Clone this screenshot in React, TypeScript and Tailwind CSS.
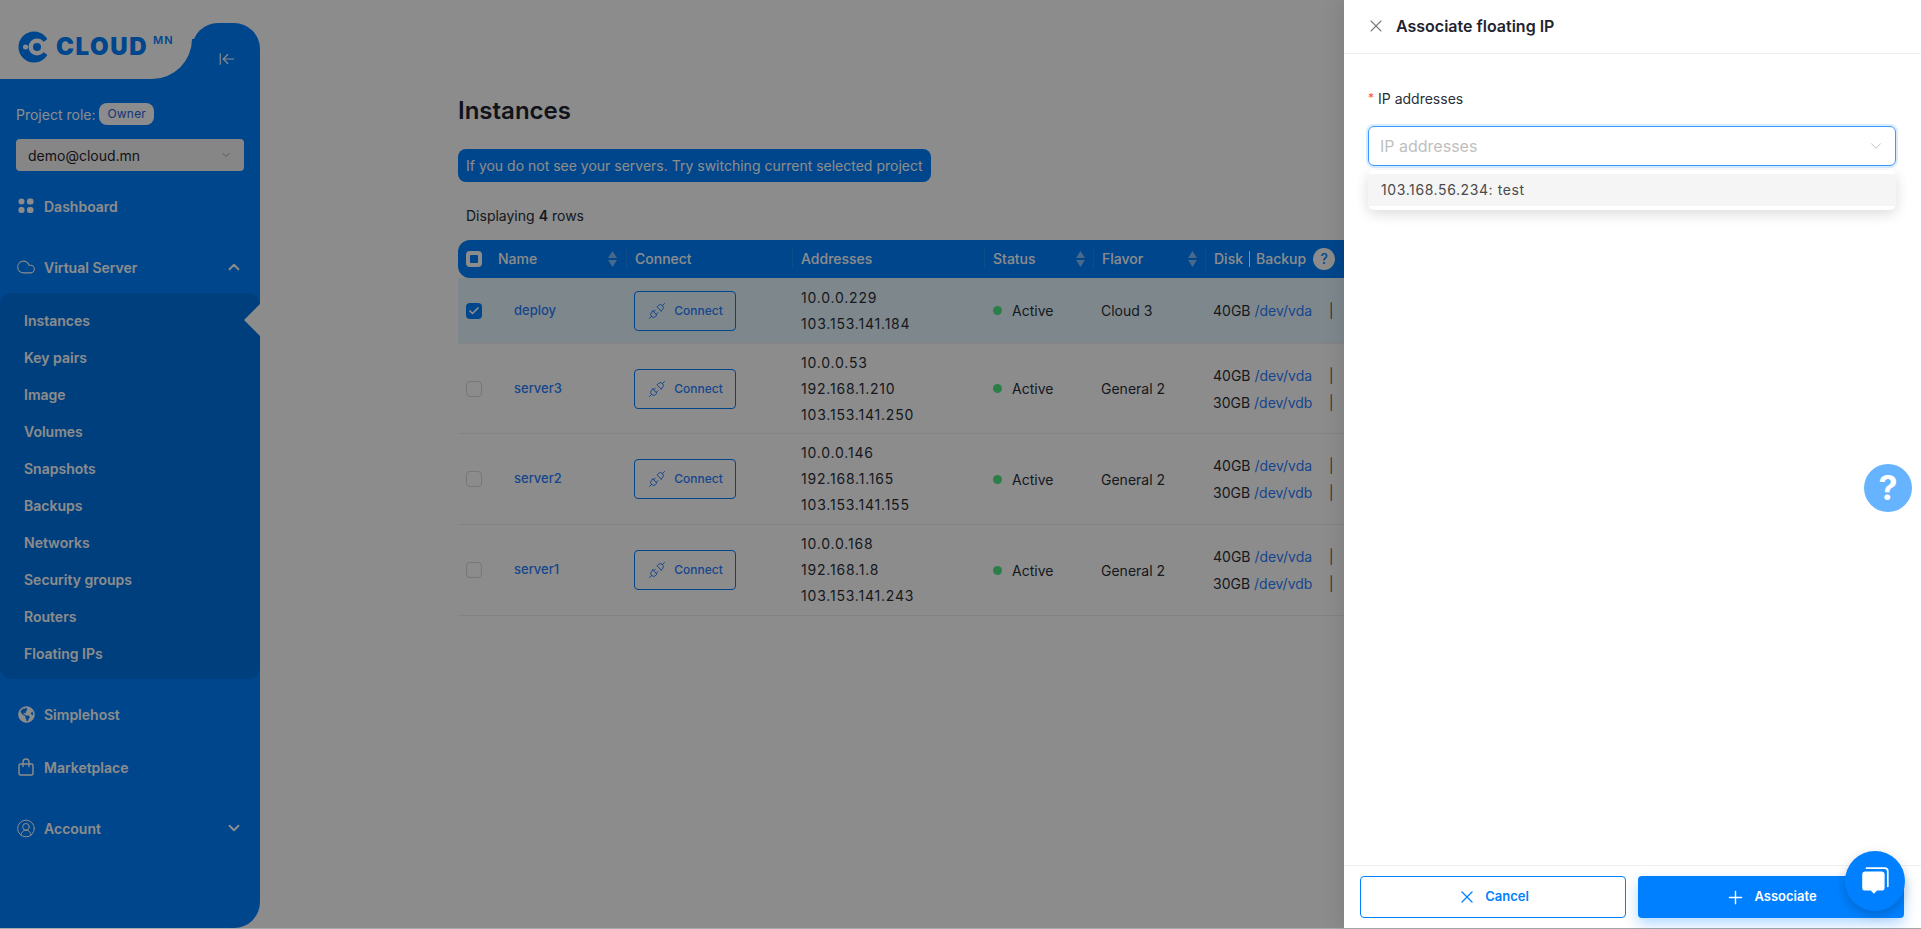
import { ArrowLeftToLine, Check, ChevronDown, ChevronUp, CircleUserRound, Cloud, Plus, X } from "lucide-react";
import { FaGlobeAmericas } from "react-icons/fa";
import { TbPlugConnected } from "react-icons/tb";

const subMenu = ["Instances", "Key pairs", "Image", "Volumes", "Snapshots", "Backups", "Networks", "Security groups", "Routers", "Floating IPs"];

const rows = [
  { name: "deploy", ips: ["10.0.0.229", "103.153.141.184"], flavor: "Cloud 3", disks: ["40GB"], selected: true, height: "h-[66px]" },
  { name: "server3", ips: ["10.0.0.53", "192.168.1.210", "103.153.141.250"], flavor: "General 2", disks: ["40GB", "30GB"], selected: false, height: "h-[90px]" },
  { name: "server2", ips: ["10.0.0.146", "192.168.1.165", "103.153.141.155"], flavor: "General 2", disks: ["40GB", "30GB"], selected: false, height: "h-[91px]" },
  { name: "server1", ips: ["10.0.0.168", "192.168.1.8", "103.153.141.243"], flavor: "General 2", disks: ["40GB", "30GB"], selected: false, height: "h-[91px]" },
];

function Logo() {
  return (
    <div className="flex items-start pl-[18px] pt-[31px]">
      <svg width="32" height="32" viewBox="0 0 32 32" className="shrink-0">
        <circle cx="16" cy="16" r="15.5" fill="#0080ff" />
        <path d="M19 16 L32 6 L32 26 Z" fill="#ffffff" />
        <circle cx="19" cy="16" r="8.5" fill="#ffffff" />
        <circle cx="19" cy="16" r="4" fill="#0080ff" />
        <circle cx="7.5" cy="16" r="2.5" fill="#ffffff" />
      </svg>
      <span className="ml-[6px] mt-[1px] text-[24px] leading-[30px] font-black tracking-[1.6px] text-[#0080ff]">CLOUD</span>
      <span className="ml-[5px] mt-[2px] text-[11px] leading-[14px] font-semibold tracking-[1px] text-[#0080ff]">MN</span>
    </div>
  );
}

function DashIcon() {
  return (
    <svg width="20" height="20" viewBox="0 0 20 20" fill="currentColor">
      <circle cx="5.5" cy="5.5" r="3" />
      <rect x="11" y="2.5" width="6.5" height="6" rx="2.5" />
      <rect x="2.5" y="11" width="6" height="6" rx="2.5" />
      <rect x="11" y="11" width="6.5" height="6" rx="2.5" />
    </svg>
  );
}

function BagIcon() {
  return (
    <svg width="20" height="20" viewBox="0 0 20 20" fill="none" stroke="currentColor" strokeWidth="1.4" strokeLinejoin="round">
      <rect x="3" y="7" width="14" height="11" rx="1.5" />
      <path d="M7 9.5 V5 Q7 2 10 2 Q13 2 13 5 V9.5" strokeLinecap="round" />
    </svg>
  );
}

function NavItem({ icon, label, chevron, className }: { icon: React.ReactNode; label: string; chevron?: "up" | "down"; className: string }) {
  return (
    <div className={`flex items-center pl-[16px] pr-[17px] text-white ${className}`}>
      <span className="flex w-[20px] justify-center">{icon}</span>
      <span className="ml-[8px] flex-1 text-[14px] font-semibold">{label}</span>
      {chevron === "up" && <ChevronUp size={18} strokeWidth={2.5} />}
      {chevron === "down" && <ChevronDown size={18} strokeWidth={2.5} />}
    </div>
  );
}

function Sidebar() {
  return (
    <aside className="flex h-full w-[260px] shrink-0 flex-col">
      <div className="relative flex h-[79px]">
        <div className="absolute bottom-0 left-[140px] h-[40px] w-[60px] bg-[#0080ff]" />
        <div className="relative w-[192px] rounded-br-[40px] bg-white">
          <Logo />
        </div>
        <div className="mt-[23px] flex flex-1 justify-center rounded-t-[26px] bg-[#0080ff] pl-[2px] pt-[27px] text-white">
          <ArrowLeftToLine size={18} strokeWidth={1.5} />
        </div>
      </div>
      <div className="flex flex-1 flex-col rounded-br-[26px] bg-[#0080ff]">
        <div className="mt-[24px] flex items-center pl-[16px]">
          <span className="text-[14px] text-white">Project role:</span>
          <span className="ml-[4px] rounded-[8px] bg-white px-[8px] py-[2px] text-[12px] tracking-[0.2px] text-[#2563d8]">Owner</span>
        </div>
        <div className="mx-[16px] mt-[14px] flex h-[32px] items-center justify-between rounded-[4px] bg-[#f5f5f5] px-[12px] text-[14px] text-[#1f2430]">
          demo@cloud.mn
          <ChevronDown size={12} className="text-[#a0a0a0]" />
        </div>
        <NavItem icon={<DashIcon />} label="Dashboard" className="mt-[20px] h-[30px]" />
        <NavItem icon={<Cloud size={22} strokeWidth={1.3} />} label="Virtual Server" chevron="up" className="mt-[31px] h-[30px]" />
        <div className="relative mt-[11px] flex h-[386px] flex-col rounded-[12px] bg-[#0073e6] pl-[24px] pt-[9px]">
          {subMenu.map((item) => (
            <div key={item} className="flex h-[37px] shrink-0 items-center text-[14px] font-semibold text-white">
              {item}
            </div>
          ))}
          <div className="absolute right-0 top-[11px] h-[32px] w-[16px] bg-white [clip-path:polygon(100%_0,0_50%,100%_100%)]" />
        </div>
        <NavItem icon={<FaGlobeAmericas size={17} />} label="Simplehost" className="mt-[20px] h-[30px]" />
        <NavItem icon={<BagIcon />} label="Marketplace" className="mt-[23px] h-[30px]" />
        <NavItem icon={<CircleUserRound size={23} strokeWidth={1.2} />} label="Account" chevron="down" className="mt-[31px] h-[30px]" />
      </div>
    </aside>
  );
}

function SortCarets() {
  return (
    <span className="flex flex-col gap-[2px] text-white/50">
      <svg width="9" height="7" viewBox="0 0 9 7" fill="currentColor"><path d="M4.5 0 L9 7 L0 7 Z" /></svg>
      <svg width="9" height="7" viewBox="0 0 9 7" fill="currentColor"><path d="M0 0 L9 0 L4.5 7 Z" /></svg>
    </span>
  );
}

function HeaderCell({ label, sort }: { label: string; sort?: boolean }) {
  return (
    <div className="flex items-center justify-between border-l border-white/10 pl-[8px] pr-[8px]">
      <span>{label}</span>
      {sort && <SortCarets />}
    </div>
  );
}

function Table() {
  return (
    <div className="w-[1300px] text-[14px] text-[#2a2f3a]">
      <div className="flex h-[48px] items-center pb-[1px] pl-[8px]">
        Displaying <b className="mx-[4px] font-semibold">4</b> rows
      </div>
      <div className="grid h-[38px] grid-cols-[32px_136px_166px_192px_109px_112px_1fr] items-center rounded-l-[12px] bg-[#0080ff] pb-[1px] text-[14px] font-medium text-white">
        <div className="flex justify-center">
          <span className="ml-[-1px] flex h-[16px] w-[16px] items-center justify-center rounded-[4px] bg-white">
            <span className="h-[8px] w-[8px] rounded-[1px] bg-[#0080ff]" />
          </span>
        </div>
        <div className="flex items-center justify-between pl-[8px] pr-[9px]">
          <span>Name</span>
          <SortCarets />
        </div>
        <HeaderCell label="Connect" />
        <HeaderCell label="Addresses" />
        <HeaderCell label="Status" sort />
        <HeaderCell label="Flavor" sort />
        <div className="flex items-center border-l border-white/10 pl-[8px]">
          <span>Disk</span>
          <span className="mx-[6px] h-[16px] w-[1px] bg-white" />
          <span>Backup</span>
          <span className="ml-[7px] flex h-[22px] w-[22px] items-center justify-center rounded-full bg-white text-[14px] text-[#0080ff]">?</span>
        </div>
      </div>
      {rows.map((row) => (
        <div
          key={row.name}
          className={`grid grid-cols-[32px_136px_166px_192px_109px_112px_1fr] items-center border-b border-[#eeeeee] ${row.height} ${row.selected ? "bg-[#e6f7ff]" : "bg-white"}`}
        >
          <div className="flex justify-center">
            {row.selected ? (
              <span className="ml-[-1px] flex h-[16px] w-[16px] items-center justify-center rounded-[4px] bg-[#0080ff]">
                <Check size={12} strokeWidth={3.5} className="text-white" />
              </span>
            ) : (
              <span className="ml-[-1px] h-[16px] w-[16px] rounded-[4px] border border-[#d9d9d9] bg-white" />
            )}
          </div>
          <div className="pl-[24px] text-[13px] font-medium text-[#2b7fff]">{row.name}</div>
          <div className="pl-[8px]">
            <div className="flex h-[40px] w-[102px] items-center justify-center gap-[7px] rounded-[4px] border border-[#0080ff] text-[12px] font-medium text-[#2b7fff]">
              <TbPlugConnected size={20} strokeWidth={1.2} />
              Connect
            </div>
          </div>
          <div className="pl-[9px] leading-[26px] tracking-[0.8px]">
            {row.ips.map((ip) => (
              <div key={ip}>{ip}</div>
            ))}
          </div>
          <div className="flex items-center pl-[9px]">
            <span className="h-[9px] w-[9px] rounded-full bg-[#4fe684]" />
            <span className="ml-[10px]">Active</span>
          </div>
          <div className="pl-[8px]">{row.flavor}</div>
          <div className="pl-[8px] leading-[27px]">
            {row.disks.map((disk, i) => (
              <div key={disk} className="flex">
                <span className="w-[116px]">
                  {disk} <span className="text-[#2b7fff]">{i === 0 ? "/dev/vda" : "/dev/vdb"}</span>
                </span>
                <span className="font-light">|</span>
              </div>
            ))}
          </div>
        </div>
      ))}
    </div>
  );
}

function Drawer() {
  return (
    <div className="absolute bottom-[1px] right-0 top-0 z-20 flex w-[577px] flex-col bg-white shadow-[-6px_0_16px_rgba(0,0,0,0.08)]">
      <div className="flex h-[54px] shrink-0 items-center border-b border-[#f0f0f0] pb-[1px] pl-[22px]">
        <X size={20} strokeWidth={1.3} className="text-[#7a7a7a]" />
        <span className="ml-[10px] text-[16px] font-semibold text-[#1f2430]">Associate floating IP</span>
      </div>
      <div className="flex-1 pl-[24px] pr-[25px] pt-[33px]">
        <div className="flex h-[22px] items-center text-[14px] text-[#2a2f3a]">
          <span className="mr-[4px] text-[12px] text-[#ff4d4f]">*</span>IP addresses
        </div>
        <div className="mt-[17px] flex h-[40px] items-center justify-between rounded-[6px] border-[1.5px] border-[#3a9bff] pl-[11px] pr-[10px] text-[16px] text-[#bfbfbf] shadow-[0_0_0_2px_rgba(0,128,255,0.15)]">
          IP addresses
          <ChevronDown size={18} strokeWidth={1.1} className="text-[#a9b4c0]" />
        </div>
        <div className="mt-[4px] rounded-[6px] bg-white py-[4px] shadow-[0_4px_14px_rgba(0,0,0,0.14)]">
          <div className="flex h-[32px] items-center bg-[#f5f5f5] pb-[1px] pl-[13px] text-[14px] tracking-[0.6px] text-[#4a4a4a]">103.168.56.234: test</div>
        </div>
      </div>
      <div className="flex h-[63px] shrink-0 gap-[12px] border-t border-[#f0f0f0] pl-[16px] pt-[10px]">
        <div className="flex h-[42px] w-[266px] items-center justify-center gap-[8px] rounded-[4px] border border-[#0080ff] text-[13px] font-semibold text-[#0080ff]">
          <X size={20} strokeWidth={1.5} />
          Cancel
        </div>
        <div className="flex h-[42px] w-[266px] items-center justify-center gap-[8px] rounded-[4px] bg-[#0080ff] text-[13px] font-semibold text-white shadow-[0_6px_14px_rgba(0,128,255,0.3)]">
          <Plus size={21} strokeWidth={1.6} />
          Associate
        </div>
      </div>
    </div>
  );
}

export default function App() {
  return (
    <div className="relative h-[929px] w-[1921px] overflow-hidden bg-[#aaaaaa] font-['Inter',sans-serif]">
      <div className="flex h-[928px] bg-white">
        <Sidebar />
        <main className="flex-1 pl-[198px]">
          <h1 className="mt-[95px] text-[24px] leading-[32px] font-semibold text-[#1f2430]">Instances</h1>
          <div className="mt-[22px] inline-block h-[33px] rounded-[8px] bg-[#0080ff] px-[8px] text-[14px] leading-[33px] text-white">
            If you do not see your servers. Try switching current selected project
          </div>
          <div className="mt-[10px]">
            <Table />
          </div>
        </main>
      </div>
      <div className="absolute inset-x-0 top-0 z-10 h-[928px] bg-black/45" />
      <Drawer />
      <div className="absolute left-[1864px] top-[464px] z-30 flex h-[48px] w-[48px] items-center justify-center rounded-full bg-[#66b3ff]">
        <span className="text-[34px] font-bold leading-none text-white">?</span>
      </div>
      <div className="absolute left-[1845px] top-[851px] z-30 flex h-[60px] w-[60px] items-center justify-center rounded-full bg-[#0080ff] shadow-[0_4px_12px_rgba(0,0,0,0.2)]">
        <svg width="32" height="32" viewBox="0 0 30 30" fill="none">
          <path d="M7 3 H24 Q27 3 27 6 V20" stroke="#ffffff" strokeWidth="1.6" strokeLinecap="round" />
          <path d="M6 6 H21 Q24 6 24 9 V21 Q24 24 21 24 H17 L14 27 L11 24 H6 Q3 24 3 21 V9 Q3 6 6 6 Z" fill="#ffffff" />
        </svg>
      </div>
    </div>
  );
}
